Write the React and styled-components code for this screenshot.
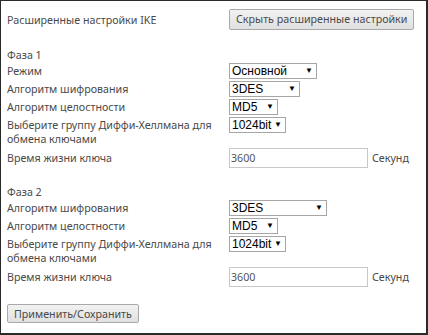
import styled, { createGlobalStyle } from "styled-components";

const GlobalStyle = createGlobalStyle`
    html, body {
        margin: 0;
        padding: 0;
        background: #ffffff;
    }
    body {
        font-family: "Noto Sans", "DejaVu Sans", sans-serif;
    }
`

const phase1 = [
    { label: "Режим", value: "Основной", width: 88 },
    { label: "Алгоритм шифрования", value: "3DES", width: 71 },
    { label: "Алгоритм целостности", value: "MD5", width: 49 },
]

const phase2 = [
    { label: "Алгоритм шифрования", value: "3DES", width: 98 },
    { label: "Алгоритм целостности", value: "MD5", width: 49 },
]

const Phase = ({ title, rows }) => {
    return (
        <StyledSection>
            <StyledTitle>{title}</StyledTitle>
            {rows.map((row) => {
                return (
                    <StyledRow key={row.label}>
                        <StyledLabel>{row.label}</StyledLabel>
                        <StyledSelect $width={row.width}>
                            <span>{row.value}</span>
                            <StyledArrow>▼</StyledArrow>
                        </StyledSelect>
                    </StyledRow>
                )
            })}
            <StyledRow>
                <StyledLabel>Выберите группу Диффи-Хеллмана для обмена ключами</StyledLabel>
                <StyledSelect $width={57}>
                    <span>1024bit</span>
                    <StyledArrow>▼</StyledArrow>
                </StyledSelect>
            </StyledRow>
            <StyledRow $tall>
                <StyledLabel>Время жизни ключа</StyledLabel>
                <StyledField>
                    <StyledInput defaultValue="3600" />
                    <StyledUnit>Секунд</StyledUnit>
                </StyledField>
            </StyledRow>
        </StyledSection>
    )
}

const App = () => {
    return (
        <StyledFrame>
            <GlobalStyle />
            <StyledHeader>
                <StyledLabel>Расширенные настройки IKE</StyledLabel>
                <StyledButton>Скрыть расширенные настройки</StyledButton>
            </StyledHeader>
            <Phase title="Фаза 1" rows={phase1} />
            <Phase title="Фаза 2" rows={phase2} />
            <StyledFooter>
                <StyledButton $small>Применить/Сохранить</StyledButton>
            </StyledFooter>
        </StyledFrame>
    )
}

const StyledFrame = styled.div`
    box-sizing: border-box;
    width: 428px;
    height: 335px;
    border: 1px solid #2a2a2a;
    border-right-width: 2px;
    border-bottom-width: 2px;
    padding: 7px 0 0 6px;
    display: flex;
    flex-direction: column;
`
const StyledHeader = styled.div`
    display: grid;
    grid-template-columns: 222px auto;
    align-items: center;
    height: 22px;
    margin-bottom: 18px;
`
const StyledSection = styled.div`
    display: flex;
    flex-direction: column;
    margin-bottom: 17px;
`
const StyledTitle = styled.div`
    font-size: 10.7px;
    color: #4a4a4a;
    height: 15px;
    line-height: 15px;
`
const StyledRow = styled.div`
    display: grid;
    grid-template-columns: 222px auto;
    align-items: ${props => props.$tall ? "center" : "start"};
    min-height: ${props => props.$tall ? "21px" : "17px"};
    margin-bottom: ${props => props.$tall ? "0" : "1px"};
`
const StyledLabel = styled.div`
    font-size: 10.7px;
    line-height: 14px;
    color: #4a4a4a;
    padding-right: 4px;
    padding-top: 1px;
`
const StyledSelect = styled.div`
    box-sizing: border-box;
    width: ${props => props.$width}px;
    height: 16px;
    border: 1px solid #a6a6a6;
    background: #ffffff;
    display: flex;
    align-items: center;
    justify-content: space-between;
    padding: 0 3px 0 2px;
    font-family: "Liberation Sans", Arial, sans-serif;
    font-size: 12px;
    color: #000000;
    justify-self: start;
`
const StyledArrow = styled.span`
    font-size: 8px;
    line-height: 8px;
`
const StyledField = styled.div`
    display: flex;
    align-items: center;
    gap: 4px;
`
const StyledInput = styled.input`
    box-sizing: border-box;
    width: 139px;
    height: 20px;
    border: 1px solid #c8c8c8;
    padding: 0 1px;
    font-family: "Noto Sans", sans-serif;
    font-size: 10.7px;
    color: #555555;
    outline: none;
`
const StyledUnit = styled.span`
    font-size: 10.7px;
    color: #4a4a4a;
`
const StyledButton = styled.button`
    justify-self: start;
    white-space: nowrap;
    height: ${props => props.$small ? "19px" : "21px"};
    padding: 0 6px;
    border: 1px solid #a9a9a9;
    border-radius: 2px;
    background: linear-gradient(#f2f2f2, #e0e0e0);
    font-family: "Noto Sans", sans-serif;
    font-size: 10.7px;
    color: #4a4a4a;
`
const StyledFooter = styled.div`
    display: flex;
`

export default App;
